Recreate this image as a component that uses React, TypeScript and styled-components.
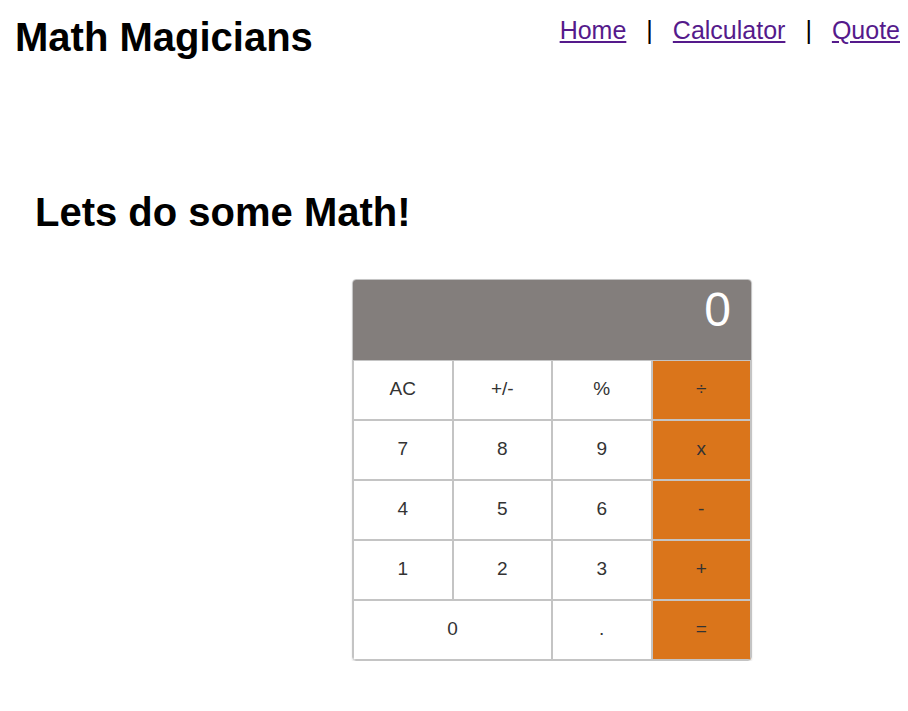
import React from 'react';
import styled, {createGlobalStyle} from 'styled-components';

const GlobalStyle = createGlobalStyle`
  body {
    margin: 0;
    background: #fff;
    font-family: "Liberation Sans", Arial, sans-serif;
  }
`

const Header = styled.header`
  display: flex;
  justify-content: space-between;
  align-items: flex-start;
  padding: 14px 8px 0 15px;
`

const Logo = styled.h1`
  margin: 0;
  font-size: 40px;
  line-height: 46px;
  font-weight: 700;
  color: #000;
`

const Nav = styled.nav`
  display: flex;
  align-items: center;
  gap: 20px;
  margin-top: 2px;
  font-size: 25px;
`

const NavLink = styled.a`
  color: #551a8b;
  text-decoration: underline;
`

const Divider = styled.span`
  color: #000;
`

const Main = styled.main`
  padding: 0 35px;
`

const Title = styled.h2`
  margin: 129px 0 44px;
  font-size: 40px;
  line-height: 46px;
  font-weight: 700;
  color: #000;
`

const Calculator = styled.div`
  width: 398px;
  margin-left: 317px;
  border: 1px solid #c4c4c4;
  border-radius: 4px;
  overflow: hidden;
  box-shadow: 0 1px 2px rgba(0, 0, 0, 0.12);
`

const Display = styled.div`
  height: 80px;
  box-sizing: border-box;
  padding: 2px 20px 0;
  background: #837e7c;
  color: #fff;
  font-size: 48px;
  text-align: right;
`

const Keys = styled.div`
  display: grid;
  grid-template-columns: repeat(4, 1fr);
  grid-auto-rows: 60px;
`

const Key = styled.button<{ $op?: boolean; $wide?: boolean }>`
  grid-column: ${p => (p.$wide ? 'span 2' : 'auto')};
  border: 1px solid #c4c4c4;
  margin: 0;
  padding: 0 0 2px;
  background: ${p => (p.$op ? '#da751b' : '#fff')};
  color: #333;
  font-family: "Liberation Sans", Arial, sans-serif;
  font-size: 19px;
  cursor: pointer;
`

const keys: { label: string; op?: boolean; wide?: boolean }[] = [
    {label: 'AC'}, {label: '+/-'}, {label: '%'}, {label: '÷', op: true},
    {label: '7'}, {label: '8'}, {label: '9'}, {label: 'x', op: true},
    {label: '4'}, {label: '5'}, {label: '6'}, {label: '-', op: true},
    {label: '1'}, {label: '2'}, {label: '3'}, {label: '+', op: true},
    {label: '0', wide: true}, {label: '.'}, {label: '=', op: true},
]

const App = () => {
    return (
        <>
            <GlobalStyle/>
            <Header>
                <Logo>Math Magicians</Logo>
                <Nav>
                    <NavLink href="#">Home</NavLink>
                    <Divider>|</Divider>
                    <NavLink href="#">Calculator</NavLink>
                    <Divider>|</Divider>
                    <NavLink href="#">Quote</NavLink>
                </Nav>
            </Header>
            <Main>
                <Title>Lets do some Math!</Title>
                <Calculator>
                    <Display>0</Display>
                    <Keys>
                        {keys.map(k => (
                            <Key key={k.label} $op={k.op} $wide={k.wide}>{k.label}</Key>
                        ))}
                    </Keys>
                </Calculator>
            </Main>
        </>
    );
};

export default App;
